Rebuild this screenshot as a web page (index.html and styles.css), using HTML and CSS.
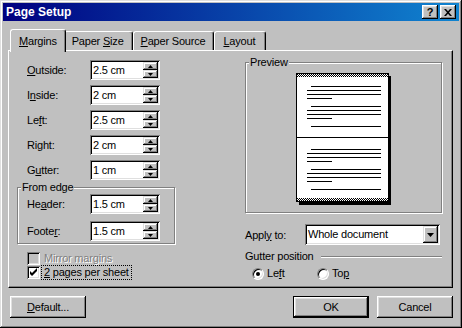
FILE: index.html
```html
<!DOCTYPE html>
<html lang="en">
<head>
  <meta charset="UTF-8">
  <title>Page Setup</title>
  <link rel="stylesheet" href="styles.css">
</head>
<body>
  <div class="window">
    <div class="titlebar">
      <span class="title">Page Setup</span>
      <span class="title-btn help">?</span>
      <span class="title-btn close">
        <svg width="8" height="7" viewBox="0 0 8 7"><path d="M0 0h2l2 2.2L6 0h2L5 3.5 8 7H6L4 4.8 2 7H0l3-3.5z"/></svg>
      </span>
    </div>

    <div class="dialog">
      <div class="tabs">
        <div class="tab active"><span><u>M</u>argins</span></div>
        <div class="tab"><span>Paper <u>S</u>ize</span></div>
        <div class="tab"><span><u>P</u>aper Source</span></div>
        <div class="tab last"><span><u>L</u>ayout</span></div>
      </div>

      <div class="panel">
        <div class="col-left">
          <div class="field">
            <label><u>O</u>utside:</label>
            <div class="spin"><span class="value">2.5 cm</span><span class="arrows"><span class="arrow"><svg width="5" height="3"><polygon points="2.5,0 5,3 0,3"/></svg></span><span class="arrow"><svg width="5" height="3"><polygon points="0,0 5,0 2.5,3"/></svg></span></span></div>
          </div>
          <div class="field">
            <label>I<u>n</u>side:</label>
            <div class="spin"><span class="value">2 cm</span><span class="arrows"><span class="arrow"><svg width="5" height="3"><polygon points="2.5,0 5,3 0,3"/></svg></span><span class="arrow"><svg width="5" height="3"><polygon points="0,0 5,0 2.5,3"/></svg></span></span></div>
          </div>
          <div class="field">
            <label>Le<u>f</u>t:</label>
            <div class="spin"><span class="value">2.5 cm</span><span class="arrows"><span class="arrow"><svg width="5" height="3"><polygon points="2.5,0 5,3 0,3"/></svg></span><span class="arrow"><svg width="5" height="3"><polygon points="0,0 5,0 2.5,3"/></svg></span></span></div>
          </div>
          <div class="field">
            <label>Ri<u>g</u>ht:</label>
            <div class="spin"><span class="value">2 cm</span><span class="arrows"><span class="arrow"><svg width="5" height="3"><polygon points="2.5,0 5,3 0,3"/></svg></span><span class="arrow"><svg width="5" height="3"><polygon points="0,0 5,0 2.5,3"/></svg></span></span></div>
          </div>
          <div class="field">
            <label>G<u>u</u>tter:</label>
            <div class="spin"><span class="value">1 cm</span><span class="arrows"><span class="arrow"><svg width="5" height="3"><polygon points="2.5,0 5,3 0,3"/></svg></span><span class="arrow"><svg width="5" height="3"><polygon points="0,0 5,0 2.5,3"/></svg></span></span></div>
          </div>

          <fieldset class="group edge">
            <legend>From edge</legend>
            <div class="field">
              <label>He<u>a</u>der:</label>
              <div class="spin"><span class="value">1.5 cm</span><span class="arrows"><span class="arrow"><svg width="5" height="3"><polygon points="2.5,0 5,3 0,3"/></svg></span><span class="arrow"><svg width="5" height="3"><polygon points="0,0 5,0 2.5,3"/></svg></span></span></div>
            </div>
            <div class="field">
              <label>Foote<u>r</u>:</label>
              <div class="spin"><span class="value">1.5 cm</span><span class="arrows"><span class="arrow"><svg width="5" height="3"><polygon points="2.5,0 5,3 0,3"/></svg></span><span class="arrow"><svg width="5" height="3"><polygon points="0,0 5,0 2.5,3"/></svg></span></span></div>
            </div>
          </fieldset>

          <div class="check disabled first">
            <span class="box"></span><span class="text">Mirror margins</span>
          </div>
          <div class="check">
            <span class="box"><svg width="9" height="9" viewBox="0 0 9 9"><polygon points="1,3 1,6 3,8 8,3 8,0 3,5"/></svg></span><span class="text focus"><u>2</u> pages per sheet</span>
          </div>
        </div>

        <div class="col-right">
          <fieldset class="group preview">
            <legend>Preview</legend>
            <svg class="page" width="95" height="132" viewBox="0 0 95 132" shape-rendering="crispEdges">
              <defs>
                <pattern id="chk" width="2" height="2" patternUnits="userSpaceOnUse">
                  <rect width="1" height="1"/><rect x="1" y="1" width="1" height="1"/>
                </pattern>
              </defs>
              <rect x="3" y="3" width="92" height="129"/>
              <rect x="0" y="0" width="93" height="129"/>
              <rect x="1" y="1" width="91" height="127" fill="#fff"/>
              <rect x="1" y="1" width="91" height="3" fill="url(#chk)"/>
              <rect x="1" y="125" width="91" height="3" fill="url(#chk)"/>
              <rect x="1" y="64" width="91" height="1"/>
              <g>
                <rect x="15" y="13" width="70" height="1"/>
                <rect x="11" y="17" width="74" height="1"/>
                <rect x="11" y="21" width="74" height="1"/>
                <rect x="11" y="25" width="25" height="1"/>
                <rect x="15" y="33" width="70" height="1"/>
                <rect x="11" y="37" width="74" height="1"/>
                <rect x="11" y="41" width="74" height="1"/>
                <rect x="11" y="45" width="25" height="1"/>
                <rect x="15" y="53" width="70" height="1"/>
                <rect x="15" y="76" width="70" height="1"/>
                <rect x="11" y="80" width="74" height="1"/>
                <rect x="11" y="84" width="74" height="1"/>
                <rect x="11" y="88" width="25" height="1"/>
                <rect x="15" y="96" width="70" height="1"/>
                <rect x="11" y="100" width="74" height="1"/>
                <rect x="11" y="104" width="74" height="1"/>
                <rect x="11" y="108" width="25" height="1"/>
                <rect x="15" y="116" width="70" height="1"/>
              </g>
            </svg>
          </fieldset>

          <div class="apply">
            <label>Appl<u>y</u> to:</label>
            <div class="combo">
              <span class="value">Whole document</span>
              <span class="drop"><svg width="7" height="4"><polygon points="0,0 7,0 3.5,4"/></svg></span>
            </div>
          </div>

          <div class="gutter-title"><span>Gutter position</span><span class="rule"></span></div>
          <div class="radios">
            <div class="option"><span class="radio"><span class="dot"></span></span><span>Le<u>f</u>t</span></div>
            <div class="option"><span class="radio"></span><span>To<u>p</u></span></div>
          </div>
        </div>
      </div>

      <div class="buttons">
        <div class="btn"><span><u>D</u>efault...</span></div>
        <div class="btn default">OK</div>
        <div class="btn">Cancel</div>
      </div>
    </div>
  </div>
</body>
</html>
```

FILE: styles.css
```css
body {
  margin: 0;
  font-family: "Liberation Sans", Arial, sans-serif;
  font-size: 11px;
  letter-spacing: -0.2px;
  color: #000;
  background: #c0c0c0;
}
.window {
  width: 462px;
  height: 328px;
  box-sizing: border-box;
  padding: 3px;
  background: #c0c0c0;
  box-shadow: inset -1px -1px #000, inset 1px 1px #dfdfdf, inset -2px -2px #808080, inset 2px 2px #fff;
}
.titlebar {
  height: 18px;
  display: flex;
  align-items: center;
  padding: 0 3px;
  background: linear-gradient(to right, #000080, #1084d0);
  color: #fff;
}
.title {
  flex: 1;
  font-size: 12px;
  font-weight: bold;
  letter-spacing: 0;
}
.title-btn {
  width: 16px;
  height: 14px;
  box-sizing: border-box;
  display: flex;
  align-items: center;
  justify-content: center;
  background: #c0c0c0;
  color: #000;
  font-weight: bold;
  font-size: 11px;
  box-shadow: inset -1px -1px #000, inset 1px 1px #fff, inset -2px -2px #808080, inset 2px 2px #dfdfdf;
}
.title-btn.help {
  margin-right: 2px;
}
.dialog {
  padding: 8px 6px 0 5px;
}

/* tabs */
.tabs {
  display: flex;
  align-items: flex-end;
  height: 21px;
  padding-left: 4px;
}
.tab {
  height: 19px;
  box-sizing: border-box;
  display: flex;
  align-items: center;
  padding: 0 8px 0 7px;
  border: 1px solid;
  border-color: #fff #000 transparent #fff;
  border-bottom: 0;
  border-radius: 3px 3px 0 0;
  box-shadow: inset -1px 0 #808080;
}
.tab.active {
  height: 23px;
  margin: 0 -2px -2px;
  padding: 0 8px;
  position: relative;
  z-index: 1;
  background: #c0c0c0;
}
.tab.last {
  padding: 0 10px 0 8px;
}
.panel {
  box-sizing: border-box;
  height: 238px;
  display: flex;
  padding: 9px 10px 0 8px;
  border: 1px solid;
  border-color: #fff #000 #000 #fff;
  box-shadow: inset -1px -1px #808080;
}
.col-left {
  width: 158px;
}
.col-right {
  width: 197px;
  margin-left: auto;
  margin-top: -4px;
}

/* fields */
.field {
  display: flex;
  align-items: center;
  margin-left: 10px;
}
.field + .field {
  margin-top: 5px;
}
.field label {
  width: 63px;
}
.spin, .combo {
  height: 20px;
  box-sizing: border-box;
  padding: 2px;
  display: flex;
  background: #fff;
  box-shadow: inset 1px 1px #808080, inset -1px -1px #fff, inset 2px 2px #000, inset -2px -2px #dfdfdf;
}
.spin {
  width: 70px;
}
.value {
  flex: 1;
  padding-left: 1px;
  line-height: 16px;
}
.arrows {
  width: 15px;
  display: flex;
  flex-direction: column;
}
.arrow, .drop {
  flex: 1;
  display: flex;
  align-items: center;
  justify-content: center;
  background: #c0c0c0;
  box-shadow: inset -1px -1px #000, inset 1px 1px #dfdfdf, inset -2px -2px #808080, inset 2px 2px #fff;
}
.arrow svg, .drop svg {
  display: block;
}

/* group boxes */
.group {
  margin: 0;
  padding: 0;
  min-width: 0;
  border: 1px solid #808080;
  box-shadow: inset 1px 1px #fff, 1px 1px #fff;
}
.group legend {
  margin-left: 3px;
  padding: 0 1px;
  line-height: 13px;
  background: #c0c0c0;
}
.edge {
  margin-top: 1px;
  padding-bottom: 2px;
}
.edge .field {
  margin-left: 9px;
}
.edge .field + .field {
  margin-top: 7px;
}

/* check boxes */
.check {
  display: flex;
  align-items: center;
  height: 14px;
  margin-left: 10px;
}
.check.first {
  margin-top: 7px;
}
.box {
  width: 13px;
  height: 13px;
  box-sizing: border-box;
  margin-right: 2px;
  display: flex;
  align-items: center;
  justify-content: center;
  background: #fff;
  box-shadow: inset 1px 1px #808080, inset -1px -1px #fff, inset 2px 2px #000, inset -2px -2px #dfdfdf;
}
.check .text {
  display: inline-block;
  padding: 0 2px;
  line-height: 13px;
}
.focus {
  outline: 1px dotted #000;
}
.disabled {
  color: #808080;
  text-shadow: 1px 1px #fff;
}
.disabled .box {
  background: #c0c0c0;
}

/* right column */
.preview {
  padding: 4px 0 7px;
}
.page {
  display: block;
  margin: 0 auto;
}
.apply {
  display: flex;
  align-items: center;
  margin-top: 11px;
}
.apply label {
  width: 60px;
}
.combo {
  width: 135px;
  height: 21px;
}
.combo .value {
  line-height: 17px;
}
.drop {
  flex: none;
  width: 15px;
}
.gutter-title {
  display: flex;
  align-items: center;
  margin-top: 5px;
  line-height: 13px;
}
.rule {
  flex: 1;
  margin-left: 7px;
  border-top: 1px solid #808080;
  border-bottom: 1px solid #fff;
}
.radios {
  display: flex;
  align-items: center;
  margin: 4px 0 0 7px;
  line-height: 13px;
}
.option {
  width: 65px;
  display: flex;
  align-items: center;
}
.radio {
  width: 12px;
  height: 12px;
  box-sizing: border-box;
  margin-right: 3px;
  display: flex;
  align-items: center;
  justify-content: center;
  border: 1px solid;
  border-color: #808080 #fff #fff #808080;
  border-radius: 50%;
  background: #fff;
  box-shadow: inset 1px 1px #000, inset -1px -1px #dfdfdf;
}
.dot {
  width: 4px;
  height: 4px;
  border-radius: 50%;
  background: #000;
}

/* buttons */
.buttons {
  display: flex;
  gap: 8px;
  margin: 8px 0 0 2px;
}
.btn {
  width: 76px;
  height: 22px;
  box-sizing: border-box;
  display: flex;
  align-items: center;
  justify-content: center;
  box-shadow: inset -1px -1px #000, inset 1px 1px #fff, inset -2px -2px #808080, inset 2px 2px #dfdfdf;
}
.btn:first-child {
  margin-right: auto;
}
.btn.default {
  border: 1px solid #000;
}
```
